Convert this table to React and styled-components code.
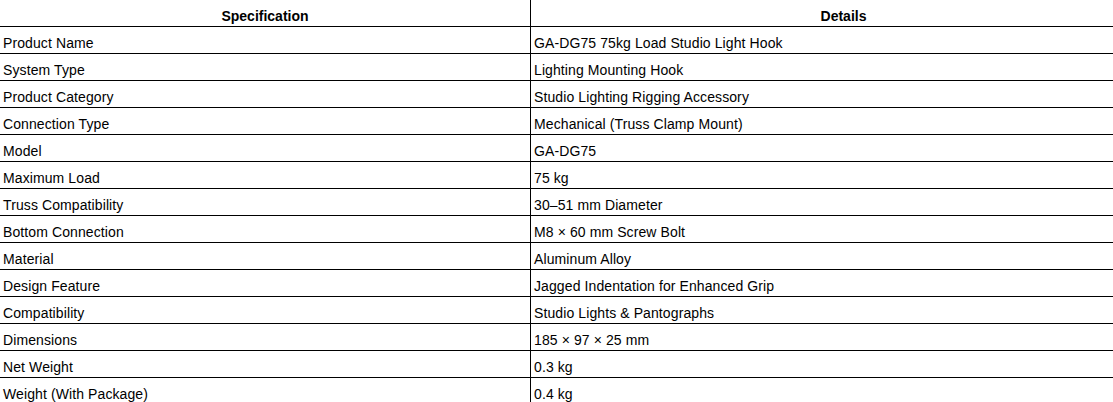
import React from 'react';
import styled, { createGlobalStyle } from 'styled-components';

const GlobalStyle = createGlobalStyle`
  html, body {
    margin: 0;
    padding: 0;
    overflow: hidden;
    background: #fff;
  }
  body {
    font-family: "Liberation Sans", Arial, sans-serif;
    font-size: 14px;
    color: #000;
  }
`;

const SpecTable = styled.table`
  width: 1156px;
  border-collapse: collapse;
  table-layout: fixed;
`;

const HeadCell = styled.th`
  width: ${props => props.$width || 'auto'};
  padding: 8px 3px 2px;
  line-height: 16px;
  font-weight: bold;
  text-align: center;
  border-bottom: 1px solid #000;
  border-right: ${props => (props.$divider ? '1px solid #000' : 'none')};
`;

const Cell = styled.td`
  padding: 8px ${props => (props.$divider ? '3px' : '3px')} 2px;
  line-height: 16px;
  text-align: left;
  white-space: nowrap;
  letter-spacing: 0.1px;
  border-bottom: 1px solid #000;
  border-right: ${props => (props.$divider ? '1px solid #000' : 'none')};
`;

const specs = [
  ['Product Name', 'GA-DG75 75kg Load Studio Light Hook'],
  ['System Type', 'Lighting Mounting Hook'],
  ['Product Category', 'Studio Lighting Rigging Accessory'],
  ['Connection Type', 'Mechanical (Truss Clamp Mount)'],
  ['Model', 'GA-DG75'],
  ['Maximum Load', '75 kg'],
  ['Truss Compatibility', '30–51 mm Diameter'],
  ['Bottom Connection', 'M8 × 60 mm Screw Bolt'],
  ['Material', 'Aluminum Alloy'],
  ['Design Feature', 'Jagged Indentation for Enhanced Grip'],
  ['Compatibility', 'Studio Lights & Pantographs'],
  ['Dimensions', '185 × 97 × 25 mm'],
  ['Net Weight', '0.3 kg'],
  ['Weight (With Package)', '0.4 kg'],
];

const App = () => {
  return (
    <>
      <GlobalStyle />
      <SpecTable>
        <thead>
          <tr>
            <HeadCell $width='524px' $divider>Specification</HeadCell>
            <HeadCell>Details</HeadCell>
          </tr>
        </thead>
        <tbody>
          {specs.map(([label, value]) => (
            <tr key={label}>
              <Cell $divider>{label}</Cell>
              <Cell>{value}</Cell>
            </tr>
          ))}
        </tbody>
      </SpecTable>
    </>
  );
};

export default App;
